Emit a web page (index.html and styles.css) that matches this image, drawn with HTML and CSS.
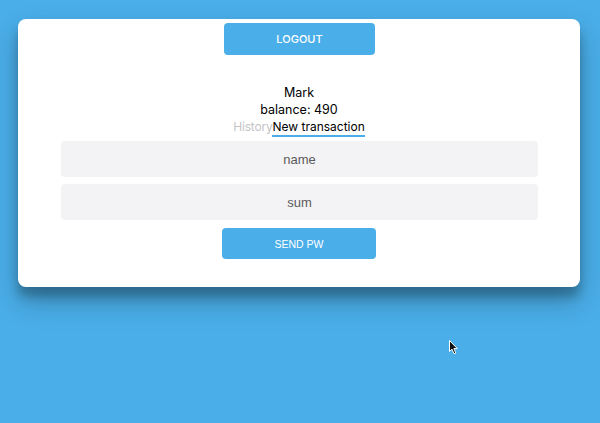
FILE: index.html
```html
<!DOCTYPE html>
<html>
<head>
<meta charset="utf-8">
<link rel="stylesheet" href="styles.css">
</head>
<body>
<div class="card">
  <button class="btn btn-logout">LOGOUT</button>
  <div class="info">
    <div class="line">Mark</div>
    <div class="line">balance: 490</div>
    <div class="tabs"><span class="tab">History</span><span class="tab active">New transaction</span></div>
  </div>
  <div class="form">
    <input class="field" type="text" placeholder="name">
    <input class="field" type="text" placeholder="sum">
    <button class="btn btn-send">SEND PW</button>
  </div>
</div>
<svg class="cursor" width="10" height="15" viewBox="0 0 10 15">
  <path d="M0.5 0.5 L0.5 11.5 L3 9.2 L5 13.8 L6.8 13 L4.9 8.6 L8.3 8.6 Z" fill="#111" stroke="#fff" stroke-width="1"/>
</svg>
</body>
</html>
```

FILE: styles.css
```css
html, body {
  margin: 0;
  padding: 0;
}
body {
  background: #4aaee8;
  width: 600px;
  height: 423px;
  overflow: hidden;
  position: relative;
  font-family: Inter, "Open Sans", sans-serif;
}
.card {
  margin: 19px 0 0 18px;
  width: 562px;
  height: 268px;
  box-sizing: border-box;
  background: #fff;
  border-radius: 8px;
  box-shadow: 0 14px 28px rgba(0,0,0,0.25), 0 10px 10px rgba(0,0,0,0.22);
  display: flex;
  flex-direction: column;
  align-items: center;
  padding-top: 4px;
}
.btn {
  border: none;
  background: #4aaee8;
  color: #fff;
  border-radius: 4px;
  font-size: 10.5px;
  padding: 0;
  display: flex;
  align-items: center;
  justify-content: center;
}
.btn-logout {
  width: 151px;
  height: 32px;
  margin-left: 1px;
  font-family: Inter, sans-serif;
  font-size: 11px;
  font-weight: 500;
}
.info {
  margin-top: 29px;
  display: flex;
  flex-direction: column;
  align-items: center;
  font-size: 12.5px;
  line-height: 17px;
  color: #000;
}
.tabs {
  display: flex;
  font-size: 12px;
  line-height: 17px;
}
.tab {
  color: #c4c4c4;
  border-bottom: 2px solid transparent;
}
.tab:first-child {
  letter-spacing: -0.2px;
}
.tab.active {
  color: #000;
  border-bottom-color: #4aaee8;
}
.form {
  margin-top: 4px;
  display: flex;
  flex-direction: column;
  align-items: center;
  gap: 7px;
  margin-left: 1px;
}
.field {
  width: 477px;
  height: 36px;
  box-sizing: border-box;
  border: none;
  border-radius: 4px;
  background: #f3f3f5;
  text-align: center;
  font-family: "Liberation Sans", Arial, sans-serif;
  font-size: 13px;
  color: #555;
  outline: none;
}
.field::placeholder {
  color: #5a5a5a;
}
.btn-send {
  margin-top: 1px;
  width: 154px;
  height: 31px;
  margin-right: 1px;
  font-family: "Liberation Sans", Arial, sans-serif;
  font-size: 10.5px;
}
.cursor {
  position: absolute;
  left: 449px;
  top: 340px;
}
```
